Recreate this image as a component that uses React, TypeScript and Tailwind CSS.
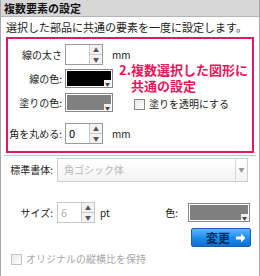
import React from "react";

const font = { fontFamily: '"Noto Sans CJK JP", "Noto Sans", sans-serif' };

function Spin({ value, disabled }: { value?: string; disabled?: boolean }) {
  return (
    <div className={`flex h-[21px] w-[38px] border ${disabled ? "border-[#c8c8c8]" : "border-[#9a9a9a]"} bg-white`}>
      <div className={`flex-1 pl-[3px] text-[11px] leading-[19px] ${disabled ? "text-[#b0b0b0]" : "text-black"}`}>{value}</div>
      <div className="flex w-[13px] flex-col border-l border-[#c8c8c8] bg-[#f2f2f2]">
        <div className="flex flex-1 items-center justify-center border-b border-[#c8c8c8] text-[6px] leading-none text-[#555]">▲</div>
        <div className="flex flex-1 items-center justify-center text-[6px] leading-none text-[#555]">▼</div>
      </div>
    </div>
  );
}

function Swatch({ color, w = 48 }: { color: string; w?: number }) {
  return (
    <div className="relative h-[19px] border border-[#888] bg-white p-[1px]" style={{ width: w }}>
      <div className="h-full w-full" style={{ background: color }} />
      <div className="absolute bottom-[1px] right-[1px] flex h-[6px] w-[7px] items-center justify-center bg-[#eee] text-[5px] leading-none text-[#444]">▼</div>
    </div>
  );
}

function Check({ disabled }: { disabled?: boolean }) {
  return <div className={`h-[11px] w-[11px] shrink-0 border ${disabled ? "border-[#c4c4c4]" : "border-[#8a8a8a]"} bg-gradient-to-br from-[#e9e9e9] to-white`} />;
}

export default function App() {
  return (
    <div className="h-[276px] w-[260px] overflow-hidden bg-white text-[10px] leading-[14px] text-[#222]" style={font}>
      <div className="flex h-full flex-col border-x border-[#a8a8a8]">
        <div className="flex h-[17px] shrink-0 items-center border-b border-[#b5b5b5] bg-[#d7d7d7] pl-[3px] text-[11px] font-bold leading-none text-[#111]">
          複数要素の設定
        </div>
        <div className="mt-[3px] whitespace-nowrap pl-[5px] text-[11px] leading-[14px]">選択した部品に共通の要素を一度に設定します。</div>

        <div className="mx-[5px] mt-[3px] flex h-[116px] shrink-0 flex-col border-2 border-[#e8175d] pt-[5px]">
          <div className="flex h-[21px] items-center">
            <div className="w-[54px] whitespace-nowrap text-right">線の太さ</div>
            <div className="ml-[3px]"><Spin /></div>
            <div className="ml-[9px]">mm</div>
          </div>
          <div className="relative mt-[4px] flex h-[19px] items-center">
            <div className="w-[54px] whitespace-nowrap text-right">線の色:</div>
            <div className="ml-[3px]"><Swatch color="#000" /></div>
            <div className="absolute left-[111px] top-[-7px] flex flex-col whitespace-nowrap text-[13px] font-bold leading-[16px] text-[#e8175d]">
              <span>2.複数選択した図形に</span>
              <span className="pl-[12px]">共通の設定</span>
            </div>
          </div>
          <div className="mt-[5px] flex h-[19px] items-center">
            <div className="w-[54px] whitespace-nowrap text-right">塗りの色:</div>
            <div className="ml-[3px]"><Swatch color="#808080" /></div>
            <div className="mt-[3px] ml-[21px] flex items-center gap-[4px] whitespace-nowrap">
              <Check />
              <span>塗りを透明にする</span>
            </div>
          </div>
          <div className="mt-[11px] flex h-[21px] items-center">
            <div className="w-[54px] whitespace-nowrap text-right">角を丸める:</div>
            <div className="ml-[3px]"><Spin value="0" /></div>
            <div className="ml-[9px]">mm</div>
          </div>
        </div>

        <div className="mx-[3px] mt-[2px] shrink-0 border-t border-[#c8c8c8]" />

        <div className="mt-[2px] flex items-center">
          <div className="w-[52px] whitespace-nowrap text-right">標準書体:</div>
          <div className="ml-[4px] flex h-[24px] w-[191px] border border-[#cfcfcf] bg-gradient-to-b from-white to-[#f3f3f3]">
            <div className="flex-1 pl-[6px] leading-[22px] text-[#b8b8b8]">角ゴシック体</div>
            <div className="flex w-[12px] items-center justify-center border-l border-[#d8d8d8] text-[6px] text-[#999]">▼</div>
          </div>
        </div>

        <div className="mt-[20px] flex items-center">
          <div className="w-[52px] whitespace-nowrap text-right">サイズ:</div>
          <div className="ml-[4px]"><Spin value="6" disabled /></div>
          <div className="ml-[5px]">pt</div>
          <div className="ml-auto flex items-center">
            <span>色:</span>
            <div className="ml-[10px] mr-[9px]"><Swatch color="#7f7f7f" w={62} /></div>
          </div>
        </div>

        <div className="mt-[5px] flex justify-end pr-[8px]">
          <div className="flex h-[19px] w-[60px] items-center justify-end rounded-[2px] border border-[#1a5fb0] bg-gradient-to-b from-[#5fb4ff] via-[#1b8ef0] to-[#0f6fd0] pr-[4px]">
            <span className="mr-[6px] text-[12px] font-bold leading-none text-[#0a2a55]">変更</span>
            <svg width="10" height="10" viewBox="0 0 10 10">
              <path d="M0 3.5h5V0.5L9.5 5 5 9.5V6.5H0z" fill="white" />
            </svg>
          </div>
        </div>

        <div className="mt-[5px] flex items-center gap-[4px] whitespace-nowrap pl-[10px]">
          <Check disabled />
          <span className="text-[#a8a8a8]">オリジナルの縦横比を保持</span>
        </div>
      </div>
    </div>
  );
}
